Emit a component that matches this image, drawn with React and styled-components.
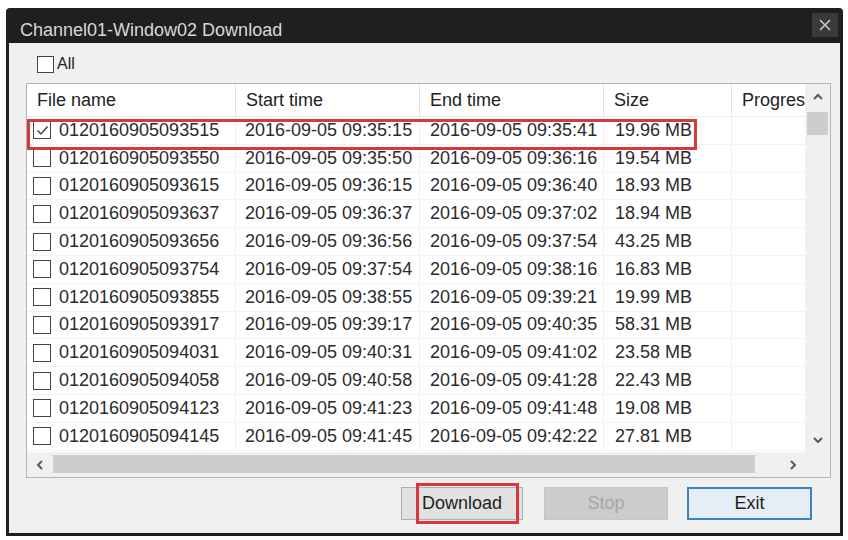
import React from 'react';
import styled, { createGlobalStyle } from 'styled-components';

const Global = createGlobalStyle`
  html, body { margin: 0; padding: 0; background: #ffffff; }
  body { font-family: "Liberation Sans", Arial, sans-serif; }
  * { box-sizing: border-box; }
`;

const Window = styled.div`
  margin: 8px 0 0 6px;
  width: 837px;
  height: 528px;
  display: flex;
  flex-direction: column;
  background: #1f1f1f;
  border-radius: 4px 4px 0 0;
  padding: 0 3px 3px 3px;
`;

const TitleBar = styled.div`
  height: 35px;
  display: flex;
  align-items: flex-start;
  justify-content: space-between;
  padding-left: 11px;
`;

const Title = styled.div`
  margin-top: 12px;
  font-size: 18px;
  line-height: 21px;
  color: #d8d8d8;
  white-space: nowrap;
`;

const CloseButton = styled.div`
  margin-top: 5px;
  margin-right: 2px;
  width: 26px;
  height: 24px;
  background: #3a3a3a;
  display: flex;
  align-items: center;
  justify-content: center;
`;

const Body = styled.div`
  flex: 1;
  background: #f0f0f0;
  display: flex;
  flex-direction: column;
  padding: 0 9px 0 17px;
`;

const AllRow = styled.div`
  height: 40px;
  display: flex;
  align-items: center;
  padding: 2px 0 0 11px;
  gap: 3px;
  font-size: 16px;
  color: #222;
`;

const Box = styled.span`
  width: ${p => p.$size}px;
  height: ${p => p.$size}px;
  flex: none;
  border: 1px solid #444;
  background: #fff;
  display: inline-flex;
  align-items: center;
  justify-content: center;
`;

const ListFrame = styled.div`
  height: 395px;
  border: 1px solid #b4b4b4;
  background: #fff;
  display: grid;
  grid-template-columns: 1fr 25px;
  grid-template-rows: 1fr 25px;
`;

const Viewport = styled.div`
  overflow: hidden;
  min-width: 0;
`;

const cols = '209px 184px 184px 128px 160px';

const HeaderRow = styled.div`
  display: grid;
  grid-template-columns: ${cols};
  height: 33px;
  border-bottom: 1px solid #ededed;
`;

const HeaderCell = styled.div`
  display: flex;
  align-items: center;
  padding-left: 10px;
  font-size: 18px;
  color: #222;
  border-right: 1px solid #e3e3e3;
  white-space: nowrap;
`;

const Rows = styled.div`
  position: relative;
`;

const Row = styled.div`
  display: grid;
  grid-template-columns: ${cols};
  height: 27.8px;
`;

const Cell = styled.div`
  display: flex;
  align-items: center;
  gap: 8px;
  padding-left: ${p => p.$pad}px;
  font-size: 18px;
  color: #2b2b2b;
  white-space: nowrap;
  border-right: 1px solid #f0f0f0;
  border-bottom: 1px solid #f3f3f3;
`;

const Highlight = styled.div`
  position: absolute;
  pointer-events: none;
  border: 3px solid #d9363e;
  left: ${p => p.$l}px;
  top: ${p => p.$t}px;
  width: ${p => p.$w}px;
  height: ${p => p.$h}px;
`;

const VScroll = styled.div`
  background: #f0f0f0;
  display: flex;
  flex-direction: column;
`;

const HScroll = styled.div`
  background: #f0f0f0;
  display: flex;
`;

const Arrow = styled.div`
  width: 25px;
  height: 25px;
  flex: none;
  display: flex;
  align-items: center;
  justify-content: center;
`;

const Track = styled.div`
  flex: 1;
  display: flex;
  flex-direction: ${p => (p.$vertical ? 'column' : 'row')};
`;

const Thumb = styled.div`
  background: #cdcdcd;
  ${p =>
    p.$vertical
      ? `margin: 3px 2px 0 2px; height: 23px;`
      : `margin: 3px 0 4px 1px; width: 702px;`}
`;

const Corner = styled.div`
  background: #f0f0f0;
`;

const Footer = styled.div`
  flex: 1;
  display: flex;
  justify-content: flex-end;
  align-items: flex-start;
  padding: 9px 19px 0 0;
`;

const Button = styled.div`
  position: relative;
  width: ${p => p.$w}px;
  height: 33px;
  margin-left: ${p => p.$gap}px;
  display: flex;
  align-items: center;
  justify-content: center;
  font-size: 18px;
  color: ${p => (p.$disabled ? '#a6a6a6' : '#1e1e1e')};
  background: ${p => (p.$disabled ? '#cccccc' : p.$primary ? '#e5eef6' : '#e1e1e1')};
  border: ${p =>
    p.$primary ? '2px solid #3a82c2' : p.$disabled ? '1px solid #c6c6c6' : '1px solid #b0b0b0'};
`;

const Chevron = ({ dir }) => {
  const pts = {
    up: '1,6 5,2 9,6',
    down: '1,2 5,6 9,2',
    left: '6,1 2,5 6,9',
    right: '2,1 6,5 2,9',
  }[dir];
  const vertical = dir === 'up' || dir === 'down';
  return (
    <svg width={vertical ? 10 : 8} height={vertical ? 8 : 10} viewBox={vertical ? '0 0 10 8' : '0 0 8 10'}>
      <polyline points={pts} fill="none" stroke="#5a5a5a" strokeWidth="2" />
    </svg>
  );
};

const files = [
  ['0120160905093515', '09:35:15', '09:35:41', '19.96 MB', true],
  ['0120160905093550', '09:35:50', '09:36:16', '19.54 MB'],
  ['0120160905093615', '09:36:15', '09:36:40', '18.93 MB'],
  ['0120160905093637', '09:36:37', '09:37:02', '18.94 MB'],
  ['0120160905093656', '09:36:56', '09:37:54', '43.25 MB'],
  ['0120160905093754', '09:37:54', '09:38:16', '16.83 MB'],
  ['0120160905093855', '09:38:55', '09:39:21', '19.99 MB'],
  ['0120160905093917', '09:39:17', '09:40:35', '58.31 MB'],
  ['0120160905094031', '09:40:31', '09:41:02', '23.58 MB'],
  ['0120160905094058', '09:40:58', '09:41:28', '22.43 MB'],
  ['0120160905094123', '09:41:23', '09:41:48', '19.08 MB'],
  ['0120160905094145', '09:41:45', '09:42:22', '27.81 MB'],
];

const day = '2016-09-05 ';

export default function App() {
  return (
    <>
      <Global />
      <Window>
        <TitleBar>
          <Title>Channel01-Window02 Download</Title>
          <CloseButton>
            <svg width="12" height="12" viewBox="0 0 12 12">
              <path d="M1 1 L11 11 M11 1 L1 11" stroke="#c8c8c8" strokeWidth="1.6" />
            </svg>
          </CloseButton>
        </TitleBar>
        <Body>
          <AllRow>
            <Box $size={17} />
            <span>All</span>
          </AllRow>
          <ListFrame>
            <Viewport>
              <HeaderRow>
                <HeaderCell>File name</HeaderCell>
                <HeaderCell>Start time</HeaderCell>
                <HeaderCell>End time</HeaderCell>
                <HeaderCell>Size</HeaderCell>
                <HeaderCell>Progress</HeaderCell>
              </HeaderRow>
              <Rows>
                {files.map(([name, start, end, size, checked]) => (
                  <Row key={name}>
                    <Cell $pad={6}>
                      <Box $size={18}>
                        {checked && (
                          <svg width="13" height="11" viewBox="0 0 13 11">
                            <polyline points="1.5,5.5 5,9 11.5,1.5" fill="none" stroke="#444" strokeWidth="1.5" />
                          </svg>
                        )}
                      </Box>
                      {name}
                    </Cell>
                    <Cell $pad={9}>{day + start}</Cell>
                    <Cell $pad={10}>{day + end}</Cell>
                    <Cell $pad={11}>{size}</Cell>
                    <Cell $pad={10} />
                  </Row>
                ))}
                <Highlight $l={0} $t={2} $w={670} $h={31} />
              </Rows>
            </Viewport>
            <VScroll>
              <Arrow><Chevron dir="up" /></Arrow>
              <Track $vertical>
                <Thumb $vertical />
              </Track>
              <Arrow><Chevron dir="down" /></Arrow>
            </VScroll>
            <HScroll>
              <Arrow><Chevron dir="left" /></Arrow>
              <Track>
                <Thumb />
              </Track>
              <Arrow><Chevron dir="right" /></Arrow>
            </HScroll>
            <Corner />
          </ListFrame>
          <Footer>
            <Button $w={122} $gap={0}>
              Download
              <Highlight $l={14} $t={-5} $w={103} $h={41} />
            </Button>
            <Button $w={124} $gap={21} $disabled>Stop</Button>
            <Button $w={125} $gap={19} $primary>Exit</Button>
          </Footer>
        </Body>
      </Window>
    </>
  );
}
